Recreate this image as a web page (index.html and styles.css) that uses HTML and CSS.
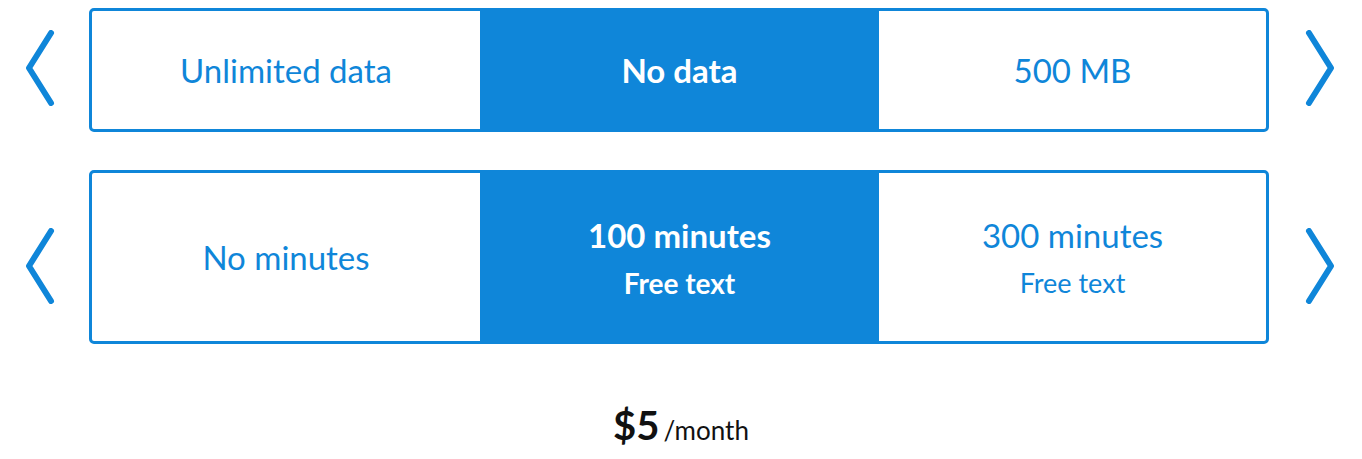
FILE: index.html
```html
<!DOCTYPE html>
<html lang="en">
<head>
    <meta charset="UTF-8">
    <meta name="viewport" content="width=device-width, initial-scale=1.0">
    <title>Plan Picker</title>
    <link rel="stylesheet" href="styles.css">
</head>
<body>
    <div class="picker">
        <div class="plan-row">
            <button class="arrow arrow-data" aria-label="Previous">
                <svg width="30" height="76" viewBox="0 0 30 76"><polyline points="26,3 4,38 26,73"/></svg>
            </button>
            <div class="options options-data">
                <div class="option">Unlimited data</div>
                <div class="option selected">No data</div>
                <div class="option">500 MB</div>
            </div>
            <button class="arrow arrow-data" aria-label="Next">
                <svg width="30" height="76" viewBox="0 0 30 76"><polyline points="4,3 26,38 4,73"/></svg>
            </button>
        </div>
        <div class="plan-row">
            <button class="arrow arrow-minutes" aria-label="Previous">
                <svg width="30" height="76" viewBox="0 0 30 76"><polyline points="26,3 4,38 26,73"/></svg>
            </button>
            <div class="options options-minutes">
                <div class="option">No minutes</div>
                <div class="option selected">
                    <span class="title">100 minutes</span>
                    <span class="sub">Free text</span>
                </div>
                <div class="option">
                    <span class="title">300 minutes</span>
                    <span class="sub">Free text</span>
                </div>
            </div>
            <button class="arrow arrow-minutes" aria-label="Next">
                <svg width="30" height="76" viewBox="0 0 30 76"><polyline points="4,3 26,38 4,73"/></svg>
            </button>
        </div>
    </div>
    <div class="price">
        <span class="amount">$5</span> <span class="period">/month</span>
    </div>
</body>
</html>
```

FILE: styles.css
```css
body {
    margin: 0;
    background-color: #ffffff;
    font-family: Lato, "Open Sans", sans-serif;
}
.picker {
    display: flex;
    flex-direction: column;
    gap: 38px;
    padding-top: 8px;
}
.plan-row {
    display: flex;
    align-items: flex-start;
    gap: 34px;
    padding-left: 25px;
}
.arrow {
    background: none;
    border: none;
    padding: 0;
    width: 30px;
    height: 76px;
    cursor: pointer;
}
.arrow svg {
    display: block;
    fill: none;
    stroke: #0f86d9;
    stroke-width: 6;
    stroke-linecap: round;
    stroke-linejoin: round;
}
.arrow-data {
    margin-top: 22px;
}
.arrow-minutes {
    margin-top: 58px;
}
.plan-row .arrow:last-child {
    margin-left: 2px;
}
.options {
    width: 1180px;
    box-sizing: border-box;
    border: 3px solid #0f86d9;
    border-radius: 5px;
    display: grid;
    grid-template-columns: 388px 399px 387px;
    overflow: hidden;
}
.options-data {
    height: 124px;
}
.options-minutes {
    height: 174px;
}
.option {
    display: flex;
    flex-direction: column;
    align-items: center;
    justify-content: center;
    color: #0f86d9;
    font-size: 33px;
    line-height: 40px;
}
.option.selected {
    background-color: #0f86d9;
    color: #ffffff;
    font-weight: bold;
}
.option .title {
    margin-top: -2px;
}
.option .sub {
    font-size: 27px;
    line-height: 30px;
    margin-top: 13px;
}
.option.selected .sub {
    font-size: 28px;
}
.price {
    margin-top: 56px;
    text-align: center;
    color: #111111;
    line-height: 50px;
}
.amount {
    font-size: 40px;
    font-weight: bold;
}
.period {
    font-size: 26px;
}
```
